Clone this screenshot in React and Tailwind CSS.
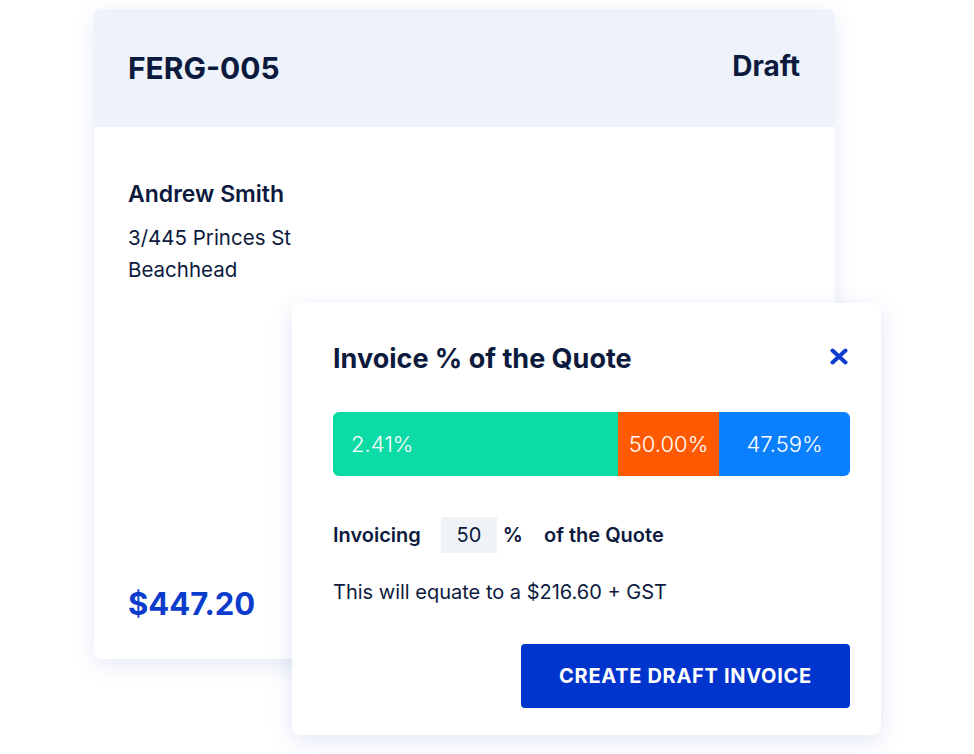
import React, { useState } from 'react';

const segments = [
  { label: '2.41%', width: 285, color: 'bg-[#0ddba5]', align: 'justify-start pl-[18px]' },
  { label: '50.00%', width: 101, color: 'bg-[#ff5a00]', align: 'justify-center' },
  { label: '47.59%', width: 131, color: 'bg-[#0a80ff]', align: 'justify-center' },
];

const QuoteCard = () => (
  <div className="ml-[94px] mt-[9px] w-[741px] h-[650px] bg-white rounded-[8px] overflow-hidden flex flex-col shadow-[0_6px_22px_rgba(40,80,180,0.12)]">
    <div className="h-[118px] bg-[#eef2fa] flex items-center justify-between pl-[34px] pr-[35px]">
      <h1 className="text-[30px] leading-[36px] font-bold text-[#0c1a3d]">FERG-005</h1>
      <span className="text-[28px] leading-[34px] font-bold text-[#0c1a3d] -mt-[4px]">Draft</span>
    </div>
    <div className="flex-1 flex flex-col pl-[34px] pt-[53px] pb-[37px] text-[#0c1a3d]">
      <p className="text-[23px] leading-[28px] font-semibold">Andrew Smith</p>
      <p className="mt-[14px] text-[20.5px] leading-[32px]">3/445 Princes St</p>
      <p className="text-[20.5px] leading-[32px]">Beachhead</p>
      <p className="mt-auto text-[31px] leading-[36px] font-bold text-[#0b3ccb]">$447.20</p>
    </div>
  </div>
);

const InvoiceModal = () => {
  const [percent, setPercent] = useState('50');

  return (
    <div className="absolute left-[292px] top-[303px] w-[589px] h-[432px] bg-white rounded-[8px] pl-[41px] pr-[31px] pt-[40px] shadow-[0_6px_24px_rgba(40,80,180,0.14)] text-[#0c1a3d]">
      <div className="flex items-center justify-between">
        <h2 className="text-[27px] leading-[32px] font-bold">Invoice % of the Quote</h2>
        <button className="mr-[2px] -mt-[6px] text-[#0b3ccb]">
          <svg width="18" height="17" viewBox="0 0 18 17" fill="none">
            <path d="M2.5 2.5 L15.5 14.5 M15.5 2.5 L2.5 14.5" stroke="currentColor" strokeWidth="4" strokeLinecap="round" />
          </svg>
        </button>
      </div>

      <div className="mt-[37px] h-[64px] flex rounded-[6px] overflow-hidden">
        {segments.map((s) => (
          <div
            key={s.label}
            className={`${s.color} ${s.align} flex items-center text-white text-[22px] font-light`}
            style={{ width: s.width }}
          >
            {s.label}
          </div>
        ))}
      </div>

      <div className="mt-[41px] flex items-center text-[20px]">
        <span className="font-semibold">Invoicing</span>
        <input
          value={percent}
          onChange={(e) => setPercent(e.target.value)}
          className="ml-[20px] w-[56px] h-[36px] bg-[#eff2f7] text-center text-[20px] outline-none"
        />
        <span className="ml-[6px] font-semibold">%</span>
        <span className="ml-[21px] font-semibold">of the Quote</span>
      </div>

      <p className="mt-[25px] text-[20px] leading-[28px]">This will equate to a $216.60 + GST</p>

      <div className="mt-[38px] flex justify-end">
        <button className="w-[329px] h-[64px] bg-[#0035cd] rounded-[4px] text-white text-[20px] font-bold tracking-[0.035em] uppercase">
          Create Draft Invoice
        </button>
      </div>
    </div>
  );
};

export default function App() {
  return (
    <div className="relative w-[974px] h-[754px] bg-white overflow-hidden font-['Inter',sans-serif]">
      <QuoteCard />
      <InvoiceModal />
    </div>
  );
}
